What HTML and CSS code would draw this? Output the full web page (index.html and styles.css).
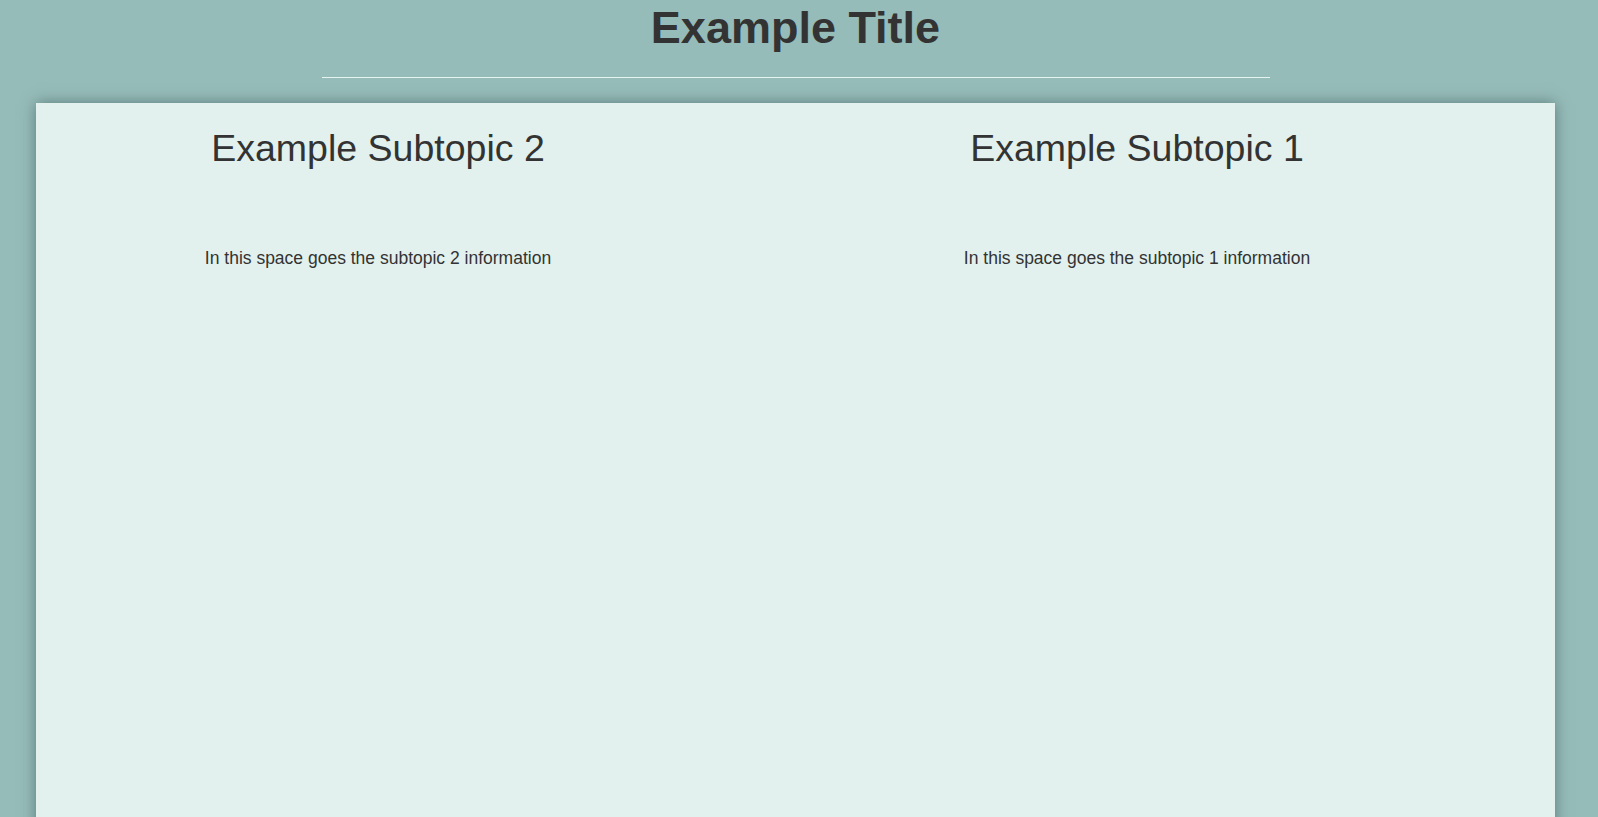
FILE: index.html
```html
<!DOCTYPE html>
<html lang="en">
<head>
<meta charset="utf-8">
<title>Example Title</title>
<link rel="stylesheet" href="styles.css">
</head>
<body>
  <header class="page-header">
    <h1 class="page-title">Example Title</h1>
    <hr class="title-rule">
  </header>
  <main class="panel">
    <section class="topic">
      <h2 class="topic-title">Example Subtopic 2</h2>
      <p class="topic-text">In this space goes the subtopic 2 information</p>
    </section>
    <section class="topic">
      <h2 class="topic-title">Example Subtopic 1</h2>
      <p class="topic-text">In this space goes the subtopic 1 information</p>
    </section>
  </main>
</body>
</html>
```

FILE: styles.css
```css
html, body {
  margin: 0;
  padding: 0;
  height: 100%;
  overflow: hidden;
}

body {
  background: #96bcb9;
  color: #333333;
  font-family: "Liberation Sans", Arial, sans-serif;
}

.page-header {
  display: flex;
  flex-direction: column;
  align-items: center;
  padding-top: 3px;
  width: 1591px;
}

.page-title {
  margin: 0;
  font-size: 45px;
  font-weight: bold;
  line-height: 49px;
  color: #333333;
}

.title-rule {
  width: 948px;
  margin: 25px 0 0 0;
  border: 0;
  border-top: 1px solid #e6f3f1;
  height: 0;
}

.panel {
  margin: 25px 0 0 36px;
  width: 1443px;
  padding: 24px 76px 0 0;
  min-height: 900px;
  background: #e2f1ee;
  box-shadow: 0 0 14px rgba(40, 70, 66, 0.55);
  display: grid;
  grid-template-columns: 684px 684px;
  column-gap: 75px;
  align-content: start;
}

.topic {
  display: flex;
  flex-direction: column;
  align-items: center;
}

.topic-title {
  margin: 0;
  font-size: 37.5px;
  font-weight: normal;
  line-height: 43px;
  color: #333333;
}

.topic-text {
  margin: 78px 0 0 0;
  font-size: 17.5px;
  line-height: 20px;
  color: #333333;
}
```
